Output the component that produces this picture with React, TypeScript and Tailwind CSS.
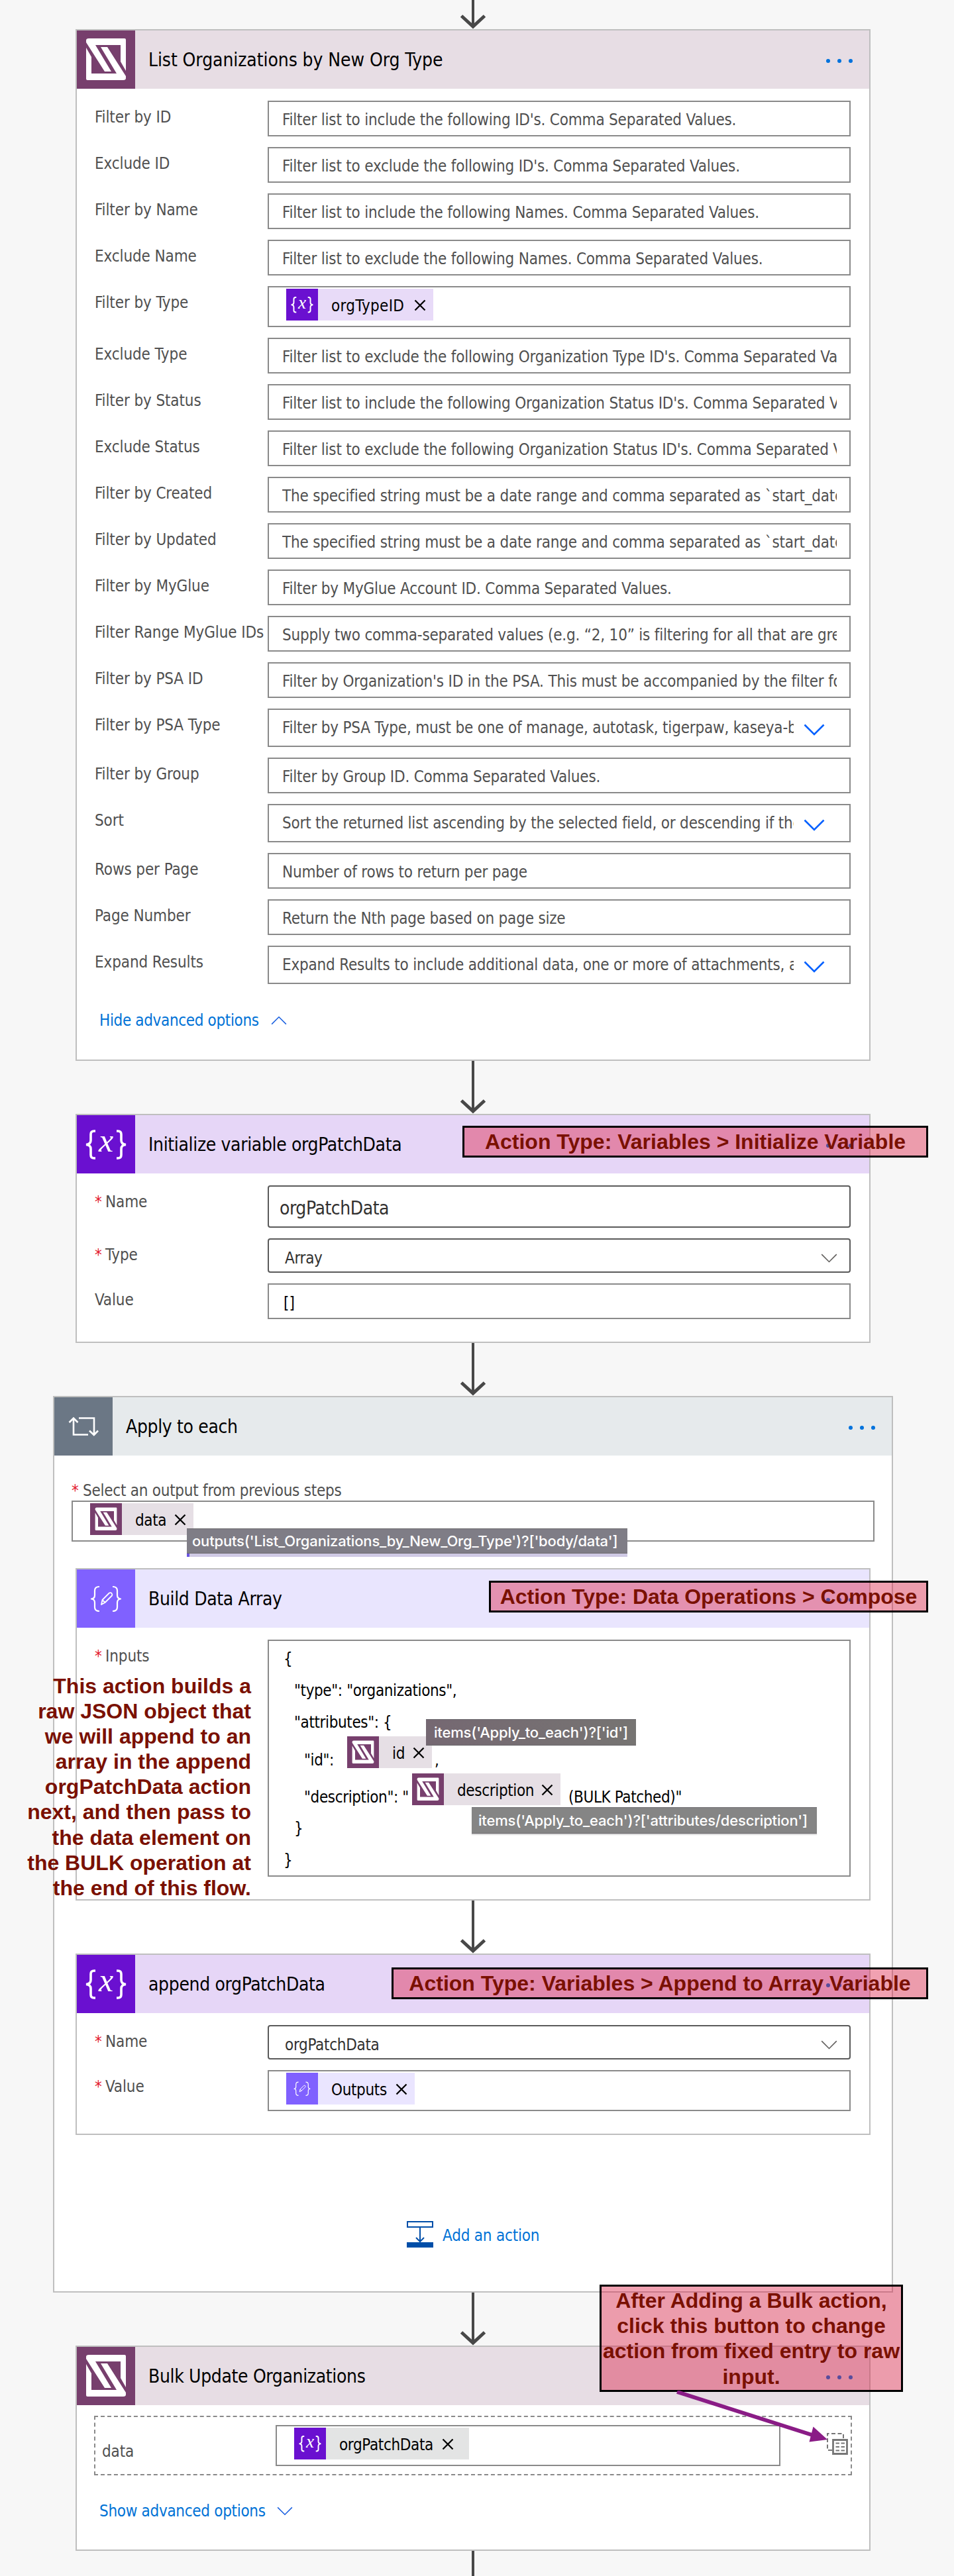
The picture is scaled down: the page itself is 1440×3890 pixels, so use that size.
import type { ReactNode } from "react";

type IconName = "glue" | "variable" | "compose" | "loop";

const iconBg: Record<IconName, string> = {
  glue: "bg-[#773f6d]",
  variable: "bg-[#6a10d0]",
  compose: "bg-[#8061ff]",
  loop: "bg-[#6b7785]",
};

function GlueGlyph() {
  return (
    <g fill="#fff">
      <path d="M18 12H72Q74 12 74 14V61L66 47V22H28L52 62H42L14 18V15Q14 12 18 12Z" />
      <path d="M70 75H16Q14 75 14 73V26L22 40V65H60L36 25H46L74 69V72Q74 75 70 75Z" />
    </g>
  );
}

function VariableGlyph() {
  return (
    <g fill="none" stroke="#fff" strokeWidth="3.6">
      <path d="M28 24H26Q21 24 21 29V38Q21 44 14 44.500Q21 45 21 51V60Q21 65 26 65H28" />
      <path d="M60 24H62Q67 24 67 29V38Q67 44 74 44.500Q67 45 67 51V60Q67 65 62 65H60" />
      <text x="44" y="55" textAnchor="middle" fontSize="50" fill="#fff" stroke="none" className="font-['Liberation_Serif',serif] italic">
        x
      </text>
    </g>
  );
}

function ComposeGlyph() {
  return (
    <g fill="none" stroke="#fff" strokeWidth="2.2" strokeLinejoin="round">
      <path d="M34 26Q27 26 27 32V39Q27 44 22 44.500Q27 45 27 50V57Q27 63 34 63" />
      <path d="M54 26Q61 26 61 32V39Q61 44 66 44.500Q61 45 61 50V57Q61 63 54 63" />
      <path d="M37 53L38.500 46L49 35.500Q51 34.500 52.500 36Q54 38 53 39.500L42.500 50ZM38.500 46L42.500 50" strokeWidth="1.8" />
    </g>
  );
}

function LoopGlyph() {
  return (
    <g fill="none" stroke="#fff" strokeWidth="2.6">
      <path d="M29 31V56.500H51M22.500 38L29 31.500L35.500 38" />
      <path d="M37 31.500H60V57M53 50.500L59.800 57L66 50.500" />
    </g>
  );
}

function ActionIcon({ name, small }: { name: IconName; small?: boolean }) {
  return (
    <div className={`${iconBg[name]} ${small ? "size-12" : "size-[88px]"} shrink-0`}>
      <svg viewBox="0 0 88 88" className="size-full">
        {name === "glue" && <GlueGlyph />}
        {name === "variable" && <VariableGlyph />}
        {name === "compose" && <ComposeGlyph />}
        {name === "loop" && <LoopGlyph />}
      </svg>
    </div>
  );
}

function Connector({ className = "h-20" }: { className?: string }) {
  return (
    <div className={`mx-auto flex w-10 flex-col items-center ${className}`}>
      <div className="w-1 flex-1 bg-[#484848]" />
      <svg viewBox="0 0 40 22" className="-mt-[19px] h-[22px] w-10 shrink-0" fill="none" stroke="#484848" strokeWidth="5">
        <path d="M2.500 2L20 18L37.500 2" />
      </svg>
    </div>
  );
}

function Dots() {
  return (
    <div className="ml-auto mr-[25px] mt-1 flex gap-[11px]">
      <i className="size-[6px] rounded-full bg-[#0072dc]" />
      <i className="size-[6px] rounded-full bg-[#0072dc]" />
      <i className="size-[6px] rounded-full bg-[#0072dc]" />
    </div>
  );
}

function Card({
  icon,
  title,
  header,
  tracking = "tracking-[-0.35px]",
  className,
  children,
}: {
  icon: IconName;
  title: string;
  header: string;
  tracking?: string;
  className: string;
  children: ReactNode;
}) {
  return (
    <section className={`mx-auto border-2 border-[#bfbfbf] bg-white ${className}`}>
      <header className={`flex h-[88px] items-center ${header}`}>
        <ActionIcon name={icon} />
        <h2 className={`ml-5 mt-[2px] whitespace-nowrap text-[28px] leading-[86px] text-black ${tracking}`}>{title}</h2>
        <Dots />
      </header>
      {children}
    </section>
  );
}

function Label({ text, required }: { text: string; required?: boolean }) {
  return (
    <div className="w-[261px] shrink-0 whitespace-nowrap text-2xl leading-[50px] tracking-[-0.11px] text-[#505050]">
      {required && <span className="inline-block w-4 text-[#e3182d]">*</span>}
      {text}
    </div>
  );
}

function Row({ label, required, children }: { label: string; required?: boolean; children: ReactNode }) {
  return (
    <div className="flex">
      <Label text={label} required={required} />
      {children}
    </div>
  );
}

function Chevron({ className, width }: { className: string; width: number }) {
  return (
    <svg viewBox="0 0 32 18" className={className} fill="none" stroke="currentColor" strokeWidth={width}>
      <path d="M1.500 1.500L16 16L30.500 1.500" />
    </svg>
  );
}

function Placeholder({ text, select }: { text: string; select?: boolean }) {
  return (
    <div className={`flex w-[880px] border-2 border-[#8a8a8a] pl-5 pr-[19px] ${select ? "h-[58px]" : "h-[54px]"}`}>
      <div className="min-w-0 flex-1 overflow-hidden whitespace-nowrap pt-[4px] text-2xl leading-[46px] tracking-[-0.2px] text-[#505050]">
        {text}
      </div>
      {select && <Chevron className="ml-[15px] mr-[18px] mt-[21px] h-[18px] w-8 text-[#0060ff]" width={2.6} />}
    </div>
  );
}

function Cross({ className = "" }: { className?: string }) {
  return (
    <svg viewBox="0 0 18 18" className={`size-[18px] shrink-0 ${className}`} stroke="#000" strokeWidth="2.3">
      <path d="M1.500 1.500L16.500 16.500M16.500 1.500L1.500 16.500" />
    </svg>
  );
}

function Token({
  icon,
  text,
  bg,
  tracking = "tracking-[-0.35px]",
  className,
}: {
  icon: IconName;
  text: string;
  bg: string;
  tracking?: string;
  className: string;
}) {
  return (
    <div className={`flex h-12 shrink-0 items-center ${bg} ${className}`}>
      <ActionIcon name={icon} small />
      <span className={`ml-5 mt-[3px] whitespace-nowrap text-2xl leading-[48px] text-black ${tracking}`}>{text}</span>
      <Cross className="ml-auto mr-[11px] mt-[2px]" />
    </div>
  );
}

type Field = { label: string; hint: string; select?: boolean };

const before: Field[] = [
  { label: "Filter by ID", hint: "Filter list to include the following ID's. Comma Separated Values." },
  { label: "Exclude ID", hint: "Filter list to exclude the following ID's. Comma Separated Values." },
  { label: "Filter by Name", hint: "Filter list to include the following Names. Comma Separated Values." },
  { label: "Exclude Name", hint: "Filter list to exclude the following Names. Comma Separated Values." },
];

const after: Field[] = [
  { label: "Exclude Type", hint: "Filter list to exclude the following Organization Type ID's. Comma Separated Values." },
  { label: "Filter by Status", hint: "Filter list to include the following Organization Status ID's. Comma Separated Values." },
  { label: "Exclude Status", hint: "Filter list to exclude the following Organization Status ID's. Comma Separated Values." },
  { label: "Filter by Created", hint: "The specified string must be a date range and comma separated as `start_date, end_date`" },
  { label: "Filter by Updated", hint: "The specified string must be a date range and comma separated as `start_date, end_date`" },
  { label: "Filter by MyGlue", hint: "Filter by MyGlue Account ID. Comma Separated Values." },
  { label: "Filter Range MyGlue IDs", hint: "Supply two comma-separated values (e.g. “2, 10” is filtering for all that are greater" },
  { label: "Filter by PSA ID", hint: "Filter by Organization's ID in the PSA. This must be accompanied by the filter for PSA" },
  { label: "Filter by PSA Type", hint: "Filter by PSA Type, must be one of manage, autotask, tigerpaw, kaseya-bms", select: true },
  { label: "Filter by Group", hint: "Filter by Group ID. Comma Separated Values." },
  { label: "Sort", hint: "Sort the returned list ascending by the selected field, or descending if the field", select: true },
  { label: "Rows per Page", hint: "Number of rows to return per page" },
  { label: "Page Number", hint: "Return the Nth page based on page size" },
  { label: "Expand Results", hint: "Expand Results to include additional data, one or more of attachments, and", select: true },
];

function Fields({ items }: { items: Field[] }) {
  return (
    <>
      {items.map((f) => (
        <Row key={f.label} label={f.label}>
          <Placeholder text={f.hint} select={f.select} />
        </Row>
      ))}
    </>
  );
}

function Body({ children }: { children: ReactNode }) {
  return <div className="flex flex-col gap-4 pl-[27px] pt-[18px]">{children}</div>;
}

function Dropdown({ text }: { text: string }) {
  return (
    <div className="flex h-[52px] w-[880px] items-start rounded-[4px] border-2 border-[#5a5a5a] pl-6 pr-[18px] text-2xl tracking-[-0.3px] text-[#323130]">
      <span className="flex-1 pt-[3px] leading-[50px]">{text}</span>
      <Chevron className="mt-[21px] h-[14px] w-[25px] text-[#605e5c]" width={2} />
    </div>
  );
}

function CodeLine({ indent, children }: { indent?: string; children: ReactNode }) {
  return <div className={`h-12 leading-[54px] ${indent ?? ""}`}>{children}</div>;
}

function Callout({ className, children }: { className: string; children: ReactNode }) {
  return (
    <div
      className={`absolute whitespace-nowrap border-[3px] border-black bg-[rgba(220,20,60,0.4)] text-center font-['Liberation_Sans',sans-serif] text-[32px] font-bold text-[#7a1000] ${className}`}
    >
      {children}
    </div>
  );
}

function Tooltip({ className, children }: { className: string; children: ReactNode }) {
  return (
    <div
      className={`absolute whitespace-nowrap border-y border-[#6c6a6e] font-['Inter',sans-serif] text-[22px] font-medium tracking-[-0.17px] text-white ${className}`}
    >
      {children}
    </div>
  );
}

export default function App() {
  return (
    <main className="relative h-[3890px] w-[1440px] overflow-hidden bg-[#f7f7f7] font-['DejaVu_Sans_Condensed','DejaVu_Sans',sans-serif]">
      <div className="w-[1428px]">
        <Connector className="h-11" />

        <Card
          icon="glue"
          title="List Organizations by New Org Type"
          header="bg-[#e7dde4]"
          tracking="tracking-[-0.08px]"
          className="h-[1558px] w-[1200px]"
        >
          <Body>
            <Fields items={before} />
            <Row label="Filter by Type">
              <div className="h-[62px] w-[880px] border-2 border-[#8a8a8a] pl-[26px] pt-[2px]">
                <Token icon="variable" text="orgTypeID" bg="bg-[#e8dbf8]" tracking="tracking-[0.3px]" className="w-[222px]" />
              </div>
            </Row>
            <Fields items={after} />
          </Body>
          <div className="mt-[31px] flex items-center pl-[34px] text-2xl leading-[48px] tracking-[-0.35px] text-[#0072d6]">
            Hide advanced options
            <Chevron className="ml-[18px] h-[14px] w-6 rotate-180 text-[#1a60e0]" width={2} />
          </div>
        </Card>

        <Connector />

        <Card icon="variable" title="Initialize variable orgPatchData" header="bg-[#e6d6f7]" className="h-[346px] w-[1200px]">
          <Body>
            <Row label="Name" required>
              <div className="h-16 w-[880px] rounded-[4px] border-2 border-[#5a5a5a] pl-4 pt-[2px] text-[28px] leading-[62px] tracking-[-0.45px] text-[#323130]">
                orgPatchData
              </div>
            </Row>
            <Row label="Type" required>
              <Dropdown text="Array" />
            </Row>
            <Row label="Value">
              <div className="h-[54px] w-[880px] border-2 border-[#8a8a8a] pl-[22px] pt-[3px] text-2xl leading-[50px] text-black">[]</div>
            </Row>
          </Body>
        </Card>

        <Connector />

        <Card icon="loop" title="Apply to each" header="bg-[#e6eaec]" className="h-[1354px] w-[1268px]">
          <div className="px-[26px] pt-[38px]">
            <div className="text-2xl leading-[30px] tracking-[-0.25px] text-[#505050]">
              <span className="inline-block w-[17px] text-[#e3182d]">*</span>
              Select an output from previous steps
            </div>
            <div className="h-[62px] border-2 border-[#8a8a8a] pl-[26px] pt-[2px]">
              <Token icon="glue" text="data" bg="bg-[#e6dfe5]" className="w-[156px]" />
            </div>
          </div>

          <Card icon="compose" title="Build Data Array" header="bg-[#e9e5fe]" className="mt-10 h-[502px] w-[1200px]">
            <Body>
              <Row label="Inputs" required>
                <div className="h-[358px] w-[880px] whitespace-pre border-2 border-[#8a8a8a] pl-[22px] text-2xl tracking-[-0.38px] text-black">
                  <CodeLine>{"{"}</CodeLine>
                  <CodeLine indent="pl-4">{'"type": "organizations",'}</CodeLine>
                  <CodeLine indent="pl-4">{'"attributes": {'}</CodeLine>
                  <div className="flex h-14 pl-[31px]">
                    <span className="w-[65px] pt-[10px] leading-[52px]">{'"id":'}</span>
                    <Token icon="glue" text="id" bg="bg-[#e6dfe5]" className="w-[128px]" />
                    <span className="ml-1 pt-[10px] leading-[52px]">,</span>
                  </div>
                  <div className="flex h-14 pl-[31px]">
                    <span className="w-[163px] pt-[10px] leading-[52px]">{'"description": "'}</span>
                    <Token icon="glue" text="description" bg="bg-[#e6dfe5]" className="w-[224px]" />
                    <span className="ml-3 pt-[10px] leading-[52px]">{'(BULK Patched)"'}</span>
                  </div>
                  <CodeLine indent="pl-4">{"}"}</CodeLine>
                  <CodeLine>{"}"}</CodeLine>
                </div>
              </Row>
            </Body>
          </Card>

          <div className="w-[1264px]">
            <Connector />
          </div>

          <Card icon="variable" title="append orgPatchData" header="bg-[#e6d6f7]" className="h-[274px] w-[1200px]">
            <Body>
              <Row label="Name" required>
                <Dropdown text="orgPatchData" />
              </Row>
              <Row label="Value" required>
                <div className="h-[62px] w-[880px] border-2 border-[#8a8a8a] pl-[26px] pt-[2px]">
                  <Token icon="compose" text="Outputs" bg="bg-[#eae5ff]" className="w-[194px]" />
                </div>
              </Row>
            </Body>
          </Card>

          <div className="mt-[130px] flex pl-[532px]">
            <svg viewBox="0 0 40 40" className="size-10" fill="none" stroke="#004ea8" strokeWidth="2">
              <path d="M1 1H39V9H1ZM20 10V31M14 25L20 31L26 25" />
              <path d="M0 32H40V40H0Z" fill="#004ea8" stroke="none" />
            </svg>
            <span className="ml-[14px] text-2xl leading-[44px] tracking-[-0.2px] text-[#0072d6]">Add an action</span>
          </div>
        </Card>

        <Connector />

        <Card icon="glue" title="Bulk Update Organizations" header="bg-[#e7dde4]" className="h-[310px] w-[1200px]">
          <div className="ml-[26px] mt-4 flex h-[90px] w-[1144px] border-2 border-dashed border-[#8a8a8a] pl-[10px] pt-3">
            <span className="w-[262px] text-2xl leading-[80px] tracking-[-0.11px] text-[#505050]">data</span>
            <div className="h-[62px] w-[762px] border-2 border-[#8a8a8a] pl-[26px] pt-[2px]">
              <Token icon="variable" text="orgPatchData" bg="bg-[#e3e4e4]" className="w-[264px] pr-3" />
            </div>
            <svg viewBox="0 0 32 34" className="ml-[70px] mt-3 h-[34px] w-8" fill="none" stroke="#767676">
              <path d="M8 26H1V1H25V8" strokeWidth="2" strokeDasharray="6 3.500" />
              <path d="M9.500 10.500H30.500V31.500H9.500Z" strokeWidth="2.800" />
              <path d="M13.500 15.500H19M21.500 15.500H27M13.500 21H19M21.500 21H27M13.500 26.500H19M21.500 26.500H27" strokeWidth="2.200" />
            </svg>
          </div>
          <div className="mt-[30px] flex items-center pl-[34px] text-2xl leading-[48px] tracking-[-0.3px] text-[#0072d6]">
            Show advanced options
            <Chevron className="ml-[17px] h-[14px] w-6 text-[#1a60e0]" width={2} />
          </div>
        </Card>

        <div className="mx-auto h-10 w-1 bg-[#484848]" />
      </div>

      {/* Expression tooltips */}
      <Tooltip className="left-[282px] top-[2308px] w-[665px] bg-[#7f7d86] pl-2 leading-9 shadow-[0_5px_0_#cfc9e4]">
        outputs('List_Organizations_by_New_Org_Type')?['body/data']
      </Tooltip>
      <div className="absolute left-[282px] top-[2346px] h-[5px] w-1 bg-[#6a55e0]" />
      <Tooltip className="left-[643px] top-[2596px] w-[317px] bg-linear-to-r from-[#756872] to-[#767472] pl-3 leading-[38px]">
        items('Apply_to_each')?['id']
      </Tooltip>
      <Tooltip className="left-[712px] top-[2729px] w-[521px] bg-[#858585] pl-[10px] leading-[38px] shadow-[0_2px_1px_#dddddd]">
        items('Apply_to_each')?['attributes/description']
      </Tooltip>

      {/* Annotations */}
      <Callout className="left-[698px] top-[1700px] w-[703px] leading-[42px]">Action Type: Variables &gt; Initialize Variable</Callout>
      <Callout className="left-[738px] top-[2387px] w-[663px] leading-[42px]">Action Type: Data Operations &gt; Compose</Callout>
      <Callout className="left-[591px] top-[2971px] w-[810px] leading-[42px]">Action Type: Variables &gt; Append to Array Variable</Callout>
      <Callout className="left-[905px] top-[3450px] h-[162px] w-[458px] pt-[2px] leading-[38.2px]">
        <p>After Adding a Bulk action,</p>
        <p>click this button to change</p>
        <p className="-mx-2">action from fixed entry to raw</p>
        <p>input.</p>
      </Callout>
      <div className="absolute left-[30px] top-[2527px] w-[349px] whitespace-nowrap text-right font-['Liberation_Sans',sans-serif] text-[32px] font-bold leading-[38.1px] text-[#7a1000]">
        <p>This action builds a</p>
        <p>raw JSON object that</p>
        <p>we will append to an</p>
        <p>array in the append</p>
        <p>orgPatchData action</p>
        <p>next, and then pass to</p>
        <p>the data element on</p>
        <p>the BULK operation at</p>
        <p>the end of this flow.</p>
      </div>
      <svg viewBox="0 0 230 80" className="absolute left-[1020px] top-[3610px] h-20 w-[230px]" fill="#8a1c86">
        <path d="M2 2L212 69" stroke="#8a1c86" strokeWidth="6" />
        <path d="M229 74L207.500 54.500L201.500 77.500Z" />
      </svg>
    </main>
  );
}
